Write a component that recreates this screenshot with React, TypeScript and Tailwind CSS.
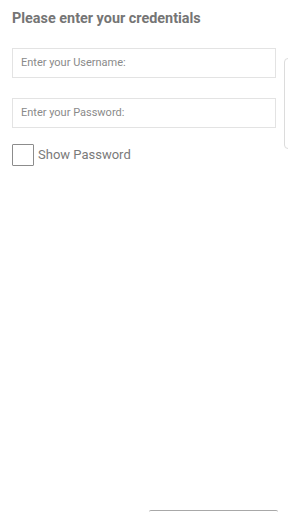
import React from "react";

export default function App() {
  return (
    <div className="relative w-[288px] h-[512px] overflow-hidden bg-white" style={{ fontFamily: "Roboto, 'Noto Sans', sans-serif" }}>
      <div className="px-3 pt-[10px]">
        <h1 className="text-[14.4px] leading-[18px] font-bold text-[#757575]">Please enter your credentials</h1>
        <div className="mt-[20px] flex flex-col gap-[20px] w-[264px]">
          <div className="h-[30px] border border-[#e3e3e3] flex items-center px-2">
            <span className="text-[11px] text-[#8a8a8a]">Enter your Username:</span>
          </div>
          <div className="h-[30px] border border-[#e3e3e3] flex items-center px-2">
            <span className="text-[11px] text-[#8a8a8a]">Enter your Password:</span>
          </div>
        </div>
        <div className="mt-[16px] flex items-center gap-1">
          <div className="w-[22px] h-[22px] border-[1.5px] border-[#8c8c8c] rounded-[1px]" />
          <span className="text-[13px] text-[#7a7a7a]">Show Password</span>
        </div>
      </div>
      <div className="absolute left-[284px] top-[58px] w-[40px] h-[91px] border border-[#dcdcdc] rounded-[4px]" />
      <div className="absolute left-[149px] top-[510px] w-[129px] h-[10px] border-t-[1.5px] border-[#a8a8a8] rounded-t-[2px]" />
    </div>
  );
}
